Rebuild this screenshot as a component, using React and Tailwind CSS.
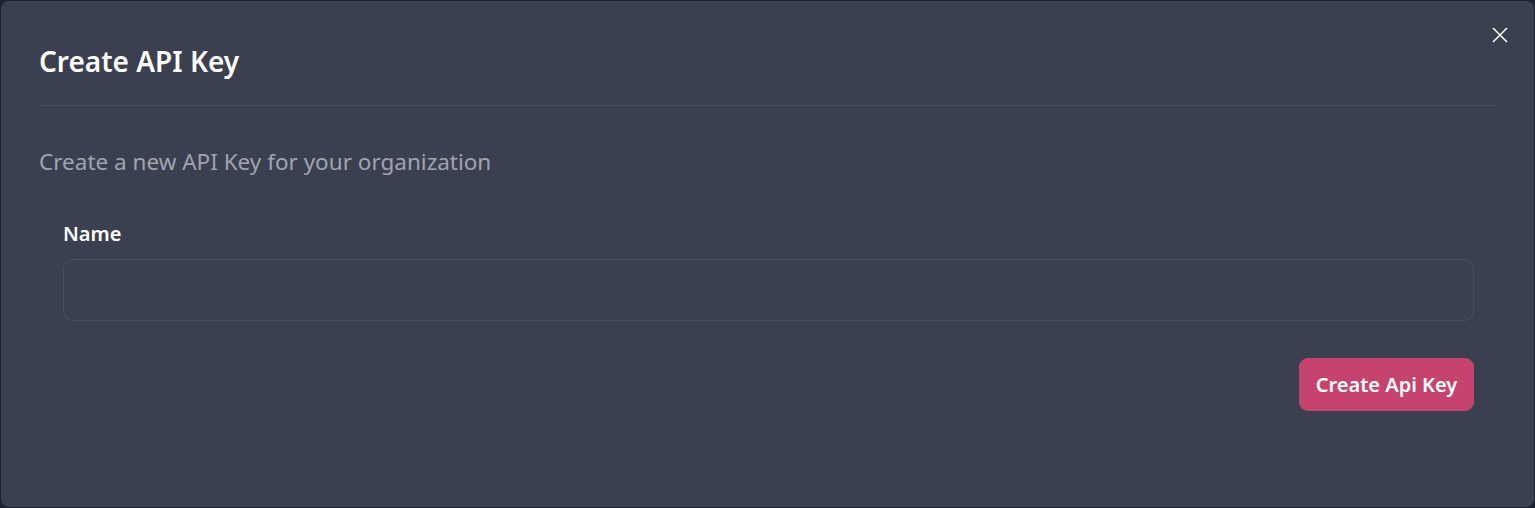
import React from "react";

export default function App() {
  return (
    <div className="w-[1535px] h-[508px] bg-[#1f2231] p-px" style={{ fontFamily: '"Segoe UI", "Noto Sans", "Open Sans", sans-serif' }}>
      <div className="relative h-full w-full rounded-lg bg-[#3b4050] pl-[38px] pr-[36px]">
        <button className="absolute right-[24px] top-[24px] text-white">
          <svg width="20" height="20" viewBox="0 0 20 20" fill="none" stroke="currentColor" strokeWidth="1.5">
            <path d="M3 3L17 17M17 3L3 17" />
          </svg>
        </button>
        <div className="border-b border-[#4a4f5f] pt-[41px] pb-[25px]">
          <h2 className="text-[28px] leading-[38px] font-semibold text-white">Create API Key</h2>
        </div>
        <p className="mt-[41px] text-[22.5px] leading-[30px] text-[#a0a4b0]">Create a new API Key for your organization</p>
        <div className="px-[24px] mt-[44px]">
          <label className="block text-[20px] leading-[26px] font-semibold text-white">Name</label>
          <input className="mt-[12px] block h-[62px] w-full rounded-[10px] border border-[#4a4f5f] bg-transparent px-4 text-white outline-none" />
          <div className="mt-[37px] flex justify-end">
            <button className="h-[53px] w-[175px] rounded-[9px] bg-[#c7436f] text-[20px] font-semibold text-white">Create Api Key</button>
          </div>
        </div>
      </div>
    </div>
  );
}
